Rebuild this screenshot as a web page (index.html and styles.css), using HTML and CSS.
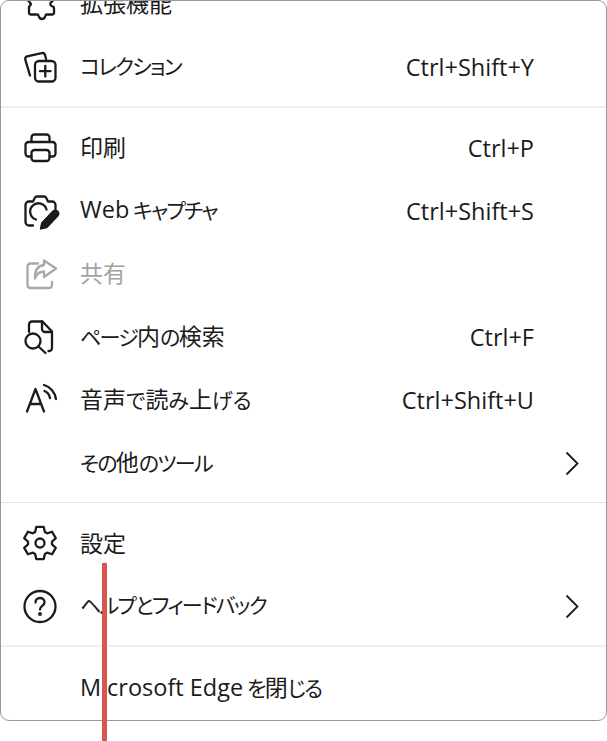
FILE: index.html
```html
<!DOCTYPE html>
<html lang="ja">
<head>
  <meta charset="UTF-8">
  <title>Edge menu</title>
  <link rel="stylesheet" href="styles.css">
</head>
<body>
  <div class="menu">
    <div class="row row-first">
      <svg class="icon" viewBox="0 0 40 40"><path d="M7 14l4 5-2 3v6a1.500 1.500 0 0 0 1.500 1.500H17c1 0 1.500.5 1.700 1.500.5 2 1.500 3 3.300 3s2.800-1 3.300-3c.2-1 .7-1.500 1.700-1.500h5.500a1.500 1.500 0 0 0 1.500-1.500v-5c0-1-.5-1.500-1.500-1.700-2-.5-2.500-1.800-2-3.300l3-3"/></svg>
      <span class="label"><b>拡張機能</b></span>
    </div>
    <div class="row">
      <svg class="icon" viewBox="0 0 40 40"><path d="M10 27.500L5.300 11.600a2.500 2.500 0 0 1 1.800-3.200l14.500-3.300a3 3 0 0 1 3.500 2.200l1 3.700"/><rect x="15" y="13" width="20.500" height="20.500" rx="4"/><path d="M25.300 18v10.500M20 23.200h10.500"/></svg>
      <span class="label">コレクション</span>
      <span class="keys">Ctrl+Shift+Y</span>
    </div>
    <div class="divider divider-soft"></div>
    <div class="row">
      <svg class="icon" viewBox="0 0 40 40"><path d="M11.500 13V8.500a3 3 0 0 1 3-3h12a3 3 0 0 1 3 3V13"/><path d="M11.500 27.500H8.500a3 3 0 0 1-3-3V16a3 3 0 0 1 3-3h24a3 3 0 0 1 3 3v8.500a3 3 0 0 1-3 3h-3"/><rect x="11.500" y="21" width="18" height="11" rx="3"/></svg>
      <span class="label"><b>印刷</b></span>
      <span class="keys">Ctrl+P</span>
    </div>
    <div class="row">
      <svg class="icon" viewBox="0 0 40 40"><path d="M13 33.500H9a3.500 3.500 0 0 1-3.500-3.500V13a3.500 3.500 0 0 1 3.500-3.500h4l2-4c.4-.7 1-1 1.700-1h7.600c.7 0 1.300.3 1.700 1l2 4h4a3.500 3.500 0 0 1 3.500 3.500v4"/><path d="M16 27.500a8.300 8.300 0 1 1 10.500-10"/><path class="solid" d="M21 36.500l1.200-5.500 11-11.500a3 3 0 0 1 4.300 4.200L26.500 35.200z"/></svg>
      <span class="label"><i>Web</i> キャプチャ</span>
      <span class="keys">Ctrl+Shift+S</span>
    </div>
    <div class="row row-off">
      <svg class="icon" viewBox="0 0 40 40"><path d="M18 8.500H10.500a3 3 0 0 0-3 3V30a3 3 0 0 0 3 3H29a3 3 0 0 0 3-3v-3"/><path d="M24 5.500L36 13.500 24 22v-5.500c-4.500 0-7.500 2.500-9 7-.5-7.500 2.500-12.500 9-13.500z"/></svg>
      <span class="label"><b>共有</b></span>
    </div>
    <div class="row">
      <svg class="icon" viewBox="0 0 40 40"><path d="M9 14V6.500a3 3 0 0 1 3-3h10.500l9.500 10V30a3 3 0 0 1-3.500 3"/><path d="M22 3.500V11a3 3 0 0 0 3 3h7"/><circle cx="13" cy="23" r="7.500"/><path d="M18.500 28.500l7 6.500"/></svg>
      <span class="label">ページ<b>内</b>の<b>検索</b></span>
      <span class="keys">Ctrl+F</span>
    </div>
    <div class="row">
      <svg class="icon" viewBox="0 0 40 40"><path d="M7 30.500L15.500 8 24 30.500M10 23h11"/><path d="M24 4c6 1.500 11 7 12 14M24.500 10c2.800 1 4.800 3.500 5.500 7"/></svg>
      <span class="label label-wide"><b>音声</b>で<b>読</b>み<b>上</b>げる</span>
      <span class="keys">Ctrl+Shift+U</span>
    </div>
    <div class="row">
      <span class="icon"></span>
      <span class="label">その<b>他</b>のツール</span>
      <svg class="chevron" viewBox="0 0 14 26"><path d="M1.500 1.500L12.500 12.500 1.500 23.500"/></svg>
    </div>
    <div class="divider"></div>
    <div class="row row-short">
      <svg class="icon" viewBox="0 0 40 40"><path transform="translate(20 19)" d="M-3.710-16.080L3.710-16.080 4.880-10.960 7.050-9.710 12.070-11.250 15.780-4.820 11.930-1.250 11.930 1.250 15.780 4.820 12.070 11.250 7.050 9.710 4.880 10.960 3.710 16.080-3.710 16.080-4.880 10.960-7.050 9.710-12.070 11.250-15.780 4.820-11.930 1.250-11.930-1.250-15.780-4.820-12.070-11.250-7.050-9.710-4.880-10.960z"/><circle cx="20" cy="19" r="4.500"/></svg>
      <span class="label"><b>設定</b></span>
    </div>
    <div class="row">
      <svg class="icon" viewBox="0 0 40 40"><circle cx="20" cy="19.500" r="15.500"/><path d="M15.500 15.500c0-2.800 2-4.500 4.500-4.500s4.500 1.700 4.500 4.200c0 3.800-4.500 3.600-4.500 7.300"/><circle class="solid" cx="20" cy="27" r=".8"/></svg>
      <span class="label">ヘルプとフィードバック</span>
      <svg class="chevron" viewBox="0 0 14 26"><path d="M1.500 1.500L12.500 12.500 1.500 23.500"/></svg>
    </div>
    <div class="divider divider-soft divider-tall"></div>
    <div class="row">
      <span class="icon"></span>
      <span class="label"><i>Microsoft Edge</i> を<b>閉</b>じる</span>
    </div>
  </div>
  <div class="marker"></div>
</body>
</html>
```

FILE: styles.css
```css
html, body { margin:0; padding:0; height:741px; overflow:hidden; background:#fff; }
body { position:relative; color:#1b1b1b; font-family:"Open Sans","Noto Sans CJK JP",sans-serif; font-size:21px; font-feature-settings:"palt"; }
.menu {
  box-sizing:border-box; height:721px; overflow:hidden;
  background:#fff; border:1px solid #999; border-radius:9px;
}
.row { display:flex; align-items:center; height:63px; padding-left:19px; }
.row-first { margin-top:-28px; }
.row-short { height:62px; }
.row-off { color:#a3a3a3; }
.row-off .icon { stroke:#a8a8a8; }
.icon {
  flex:none; display:block; width:40px; height:40px; margin-right:20px;
  fill:none; stroke:#1b1b1b; stroke-width:2.3; stroke-linecap:round; stroke-linejoin:round;
}
.icon .solid { fill:#1b1b1b; }
.label { flex:1; padding-bottom:5px; white-space:nowrap; letter-spacing:-1.7px; }
.label-wide { letter-spacing:0; }
.label b { font-weight:400; font-size:23px; letter-spacing:0; }
.label i { font-style:normal; font-size:23.5px; letter-spacing:0; }
.keys { margin-right:72px; padding-bottom:2px; white-space:nowrap; font-size:23.5px; }
.chevron {
  flex:none; width:14px; height:26px; margin-right:27px;
  fill:none; stroke:#1b1b1b; stroke-width:1.8;
}
.divider { height:18px; padding-top:7px; box-sizing:border-box; }
.divider::before { content:""; display:block; height:1px; background:#e2e2e2; }
.divider-soft::before { height:2px; background:#efefef; }
.divider-tall { height:19px; }
.marker { position:absolute; left:102px; top:563px; width:5px; height:178px; background:#d85650; }
```
